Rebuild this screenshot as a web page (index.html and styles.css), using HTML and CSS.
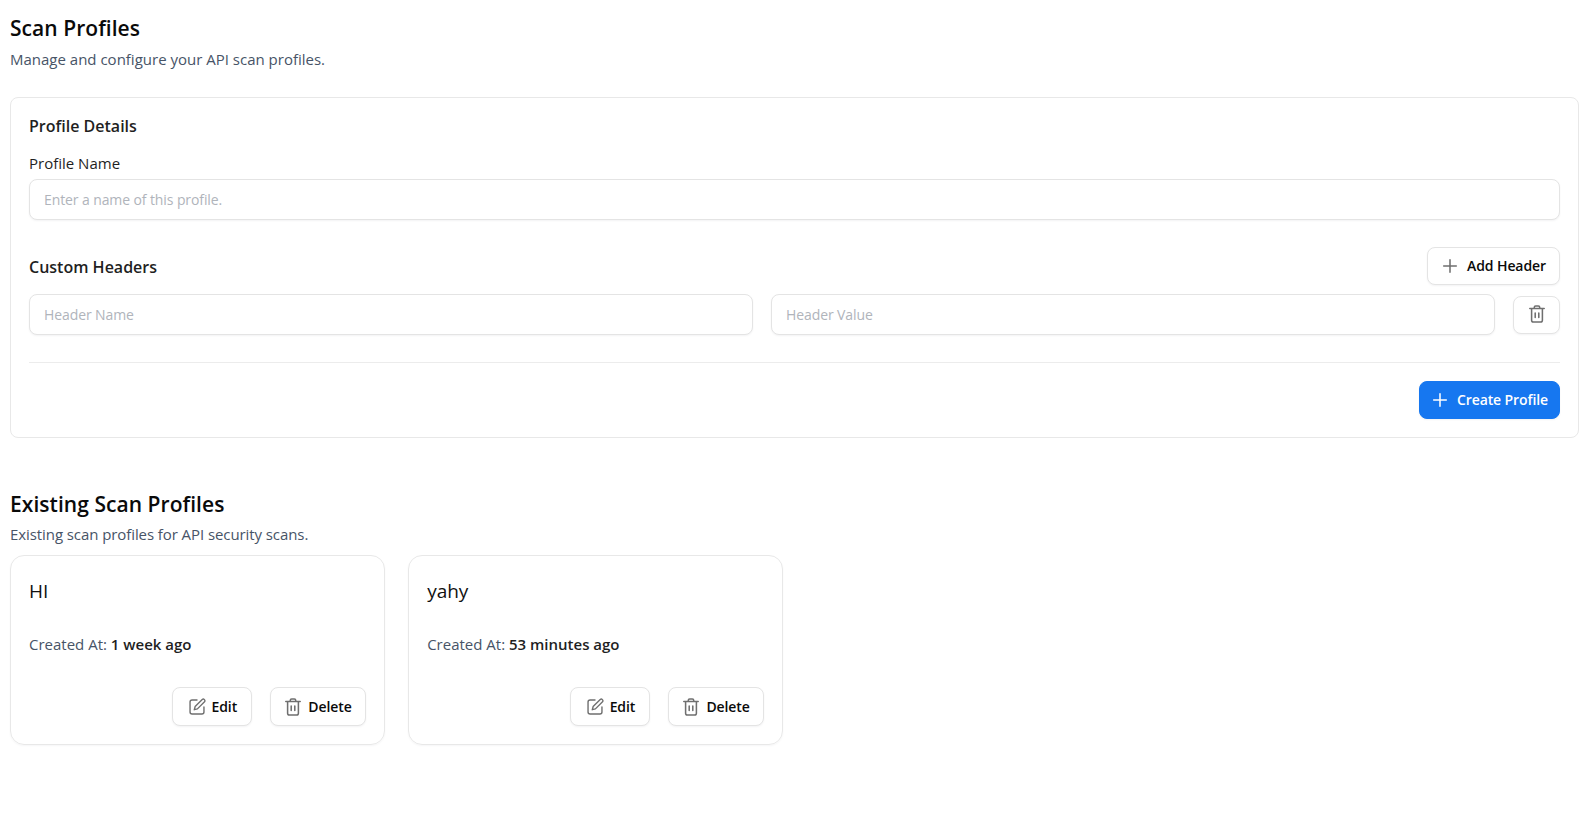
FILE: index.html
```html
<!DOCTYPE html>
<html lang="en">
<head>
<meta charset="utf-8">
<title>Scan Profiles</title>
<link rel="stylesheet" href="styles.css">
</head>
<body>
<main class="page">
  <header class="page-head">
    <h1 class="page-title">Scan Profiles</h1>
    <p class="page-sub">Manage and configure your API scan profiles.</p>
  </header>

  <section class="panel">
    <h2 class="panel-title">Profile Details</h2>
    <label class="field-label" for="pname">Profile Name</label>
    <input class="input" id="pname" type="text" placeholder="Enter a name of this profile.">

    <div class="headers-head">
      <h2 class="panel-title flush">Custom Headers</h2>
      <button class="btn btn-add" type="button">
        <svg class="icon" viewBox="2 2 20 20"><path d="M5 12h14M12 5v14"/></svg>
        <span>Add Header</span>
      </button>
    </div>
    <div class="header-row">
      <input class="input" type="text" placeholder="Header Name">
      <input class="input" type="text" placeholder="Header Value">
      <button class="btn btn-icon" type="button" aria-label="Remove header">
        <svg class="icon" viewBox="2 2 20 20"><path d="M4 6h16M9 6V4.500A1.500 1.500 0 0 1 10.500 3h3A1.500 1.500 0 0 1 15 4.500V6M6 6v13a2 2 0 0 0 2 2h8a2 2 0 0 0 2-2V6M10 11v5M14 11v5"/></svg>
      </button>
    </div>
    <div class="panel-foot">
      <button class="btn btn-primary" type="button">
        <svg class="icon" viewBox="2 2 20 20"><path d="M5 12h14M12 5v14"/></svg>
        <span>Create Profile</span>
      </button>
    </div>
  </section>

  <section class="existing">
    <h2 class="section-title">Existing Scan Profiles</h2>
    <p class="section-sub">Existing scan profiles for API security scans.</p>
    <div class="card-grid">
      <article class="card">
        <h3 class="card-name">HI</h3>
        <p class="card-meta">Created At: <strong>1 week ago</strong></p>
        <div class="card-actions">
          <button class="btn btn-card" type="button">
            <svg class="icon" viewBox="1 1 22 22"><path d="M12 3.500H6a2.500 2.500 0 0 0-2.500 2.500v12A2.500 2.500 0 0 0 6 20.500h12a2.500 2.500 0 0 0 2.500-2.500v-6"/><path d="M18.400 2.800a2 2 0 0 1 2.800 2.800L12.500 14.300l-3.800 1 1-3.800z"/></svg>
            <span>Edit</span>
          </button>
          <button class="btn btn-card" type="button">
            <svg class="icon" viewBox="2 2 20 20"><path d="M4 6h16M9 6V4.500A1.500 1.500 0 0 1 10.500 3h3A1.500 1.500 0 0 1 15 4.500V6M6 6v13a2 2 0 0 0 2 2h8a2 2 0 0 0 2-2V6M10 11v5M14 11v5"/></svg>
            <span>Delete</span>
          </button>
        </div>
      </article>
      <article class="card">
        <h3 class="card-name">yahy</h3>
        <p class="card-meta">Created At: <strong>53 minutes ago</strong></p>
        <div class="card-actions">
          <button class="btn btn-card" type="button">
            <svg class="icon" viewBox="1 1 22 22"><path d="M12 3.500H6a2.500 2.500 0 0 0-2.500 2.500v12A2.500 2.500 0 0 0 6 20.500h12a2.500 2.500 0 0 0 2.500-2.500v-6"/><path d="M18.400 2.800a2 2 0 0 1 2.800 2.800L12.500 14.300l-3.800 1 1-3.800z"/></svg>
            <span>Edit</span>
          </button>
          <button class="btn btn-card" type="button">
            <svg class="icon" viewBox="2 2 20 20"><path d="M4 6h16M9 6V4.500A1.500 1.500 0 0 1 10.500 3h3A1.500 1.500 0 0 1 15 4.500V6M6 6v13a2 2 0 0 0 2 2h8a2 2 0 0 0 2-2V6M10 11v5M14 11v5"/></svg>
            <span>Delete</span>
          </button>
        </div>
      </article>
    </div>
  </section>
</main>
</body>
</html>
```
FILE: styles.css
```css
* { box-sizing: border-box; }
html, body { margin: 0; padding: 0; background: #fff; }
body {
  font-family: "Open Sans", "Noto Sans", sans-serif;
  font-size: 14px;
  color: #1a1a1a;
}
.page { padding: 10px 11px 10px 10px; }
.page-head { height: 87px; }
.page-title {
  margin: 0;
  font-size: 21px;
  line-height: 36px;
  font-weight: 600;
  color: #0a0a0a;
  letter-spacing: .05px;
}
.page-sub {
  margin: 1px 0 0;
  font-size: 15px;
  line-height: 24px;
  color: #475467;
}
.panel {
  height: 341px;
  padding: 16px 18px;
  border: 1px solid #e8e8e8;
  border-radius: 8px;
}
.panel-title {
  margin: 0 0 13px;
  font-size: 16px;
  line-height: 24px;
  font-weight: 600;
  color: #1f1f1f;
}
.panel-title.flush { margin: 0; padding-top: 2px; }
.field-label {
  display: block;
  font-size: 15px;
  line-height: 24px;
  margin-bottom: 4px;
  color: #1f1f1f;
}
.input {
  display: block;
  width: 100%;
  min-width: 0;
  height: 41px;
  padding: 0 14px;
  font: inherit;
  font-size: 14px;
  letter-spacing: -.1px;
  color: #1a1a1a;
  background: #fff;
  border: 1px solid #e4e4e4;
  border-radius: 8px;
  box-shadow: 0 1px 2px rgba(16, 24, 40, .05);
}
.input::placeholder { color: #b0b4bb; }
.headers-head {
  display: flex;
  align-items: center;
  justify-content: space-between;
  margin-top: 27px;
}
.header-row {
  display: grid;
  grid-template-columns: 1fr 1fr 47px;
  gap: 18px;
  align-items: center;
  margin-top: 9px;
  padding-bottom: 27px;
  border-bottom: 1px solid #ececec;
}
.panel-foot {
  display: flex;
  justify-content: flex-end;
  margin-top: 18px;
}
.btn {
  display: inline-flex;
  align-items: center;
  justify-content: center;
  gap: 8px;
  height: 38px;
  padding: 0 13px;
  font: inherit;
  font-size: 14px;
  font-weight: 600;
  letter-spacing: -.1px;
  white-space: nowrap;
  color: #0a0a0a;
  background: #fff;
  border: 1px solid #e4e4e4;
  border-radius: 8px;
  box-shadow: 0 1px 2px rgba(16, 24, 40, .05);
}
.icon {
  width: 18px;
  height: 18px;
  flex: none;
  fill: none;
  stroke: #6f6f6f;
  stroke-width: 1.700;
  stroke-linecap: round;
  stroke-linejoin: round;
}
.btn-add { width: 133px; }
.btn-add span, .btn-primary span { margin-top: -2px; }
.btn-icon { padding: 0 0 2px; width: 47px; }
.btn-primary {
  width: 141px;
  color: #fff;
  background: #1677f0;
  border-color: #1677f0;
}
.btn-primary .icon { stroke: #fff; }
.existing { margin-top: 48px; }
.section-title {
  margin: 0;
  font-size: 21px;
  line-height: 37px;
  font-weight: 600;
  color: #0a0a0a;
  letter-spacing: .05px;
}
.section-sub {
  margin: 0 0 10px;
  font-size: 15px;
  line-height: 22px;
  letter-spacing: -.08px;
  color: #475467;
}
.card-grid {
  display: grid;
  grid-template-columns: repeat(4, 1fr);
  gap: 23.500px;
}
.card {
  height: 190px;
  padding: 20px 18px;
  border: 1px solid #e8e8e8;
  border-radius: 14px;
  box-shadow: 0 1px 2px rgba(16, 24, 40, .04);
}
.card-name {
  margin: 0;
  font-size: 19px;
  line-height: 30px;
  font-weight: 400;
  color: #111;
}
.card-meta {
  margin: 26px 0 0;
  font-size: 15px;
  line-height: 24px;
  color: #475467;
}
.card-meta strong { font-weight: 600; color: #1f1f1f; }
.card-actions {
  display: flex;
  justify-content: flex-end;
  gap: 18px;
  margin-top: 31px;
}
.btn-card { height: 39px; min-width: 80px; gap: 6px; }
```
